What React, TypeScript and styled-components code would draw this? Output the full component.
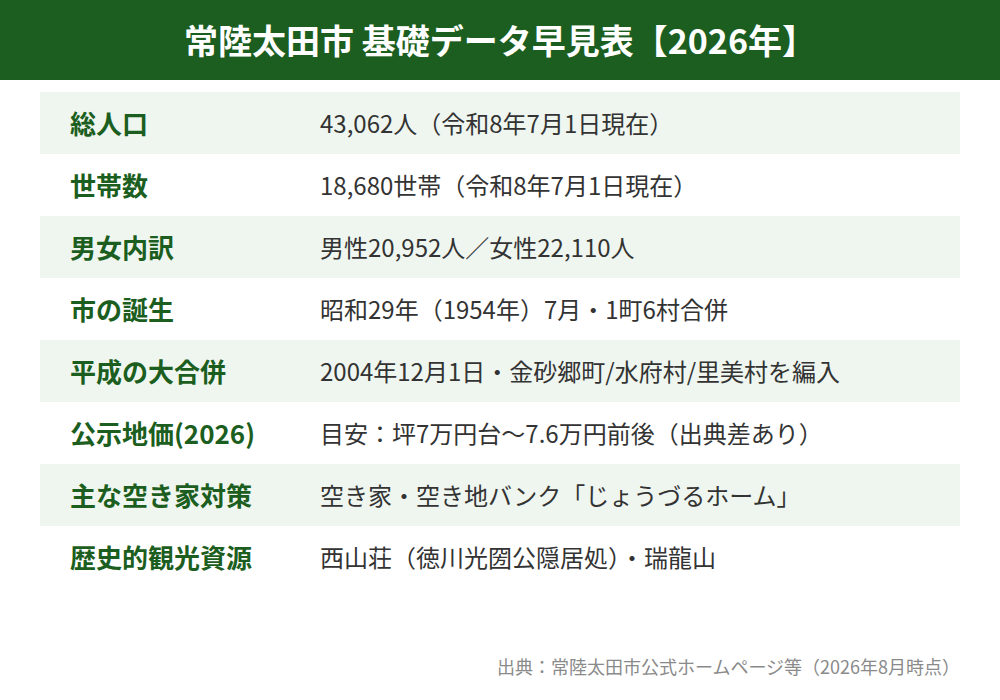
import React from "react";
import styled, { createGlobalStyle } from "styled-components";

const GlobalStyle = createGlobalStyle`
  html, body {
    margin: 0;
    padding: 0;
    background: #ffffff;
    font-family: "Noto Sans CJK JP", "Noto Sans", sans-serif;
  }
  * { box-sizing: border-box; }
`;

const Page = styled.div`
  width: 1000px;
  height: 700px;
  display: flex;
  flex-direction: column;
  background: #ffffff;
`;

const Header = styled.header`
  height: 80px;
  background: #1b5e20;
  display: flex;
  align-items: center;
  justify-content: center;
`;

const Title = styled.h1`
  margin: 0;
  color: #ffffff;
  font-size: 34px;
  font-weight: 700;
  line-height: 1;
`;

const Table = styled.div`
  margin: 12px 40px 0;
  display: flex;
  flex-direction: column;
`;

const Row = styled.div<{ $shaded: boolean }>`
  height: 62px;
  display: grid;
  grid-template-columns: 280px 1fr;
  align-items: center;
  background: ${(p) => (p.$shaded ? "#eff6f0" : "#ffffff")};
`;

const Label = styled.div`
  padding-left: 30px;
  color: #1b5e20;
  font-size: 26px;
  font-weight: 700;
  line-height: 1;
`;

const Value = styled.div`
  color: #333333;
  font-size: 24px;
  font-weight: 400;
  line-height: 1;
`;

const Footer = styled.div`
  margin-top: auto;
  padding: 0 40px 20px;
  text-align: right;
  color: #8a8a8a;
  font-size: 18px;
  line-height: 27px;
`;

const rows: [string, string][] = [
  ["総人口", "43,062人（令和8年7月1日現在）"],
  ["世帯数", "18,680世帯（令和8年7月1日現在）"],
  ["男女内訳", "男性20,952人／女性22,110人"],
  ["市の誕生", "昭和29年（1954年）7月・1町6村合併"],
  ["平成の大合併", "2004年12月1日・金砂郷町/水府村/里美村を編入"],
  ["公示地価(2026)", "目安：坪7万円台〜7.6万円前後（出典差あり）"],
  ["主な空き家対策", "空き家・空き地バンク「じょうづるホーム」"],
  ["歴史的観光資源", "西山荘（徳川光圀公隠居処）・瑞龍山"],
];

export default function App() {
  return (
    <Page>
      <GlobalStyle />
      <Header>
        <Title>常陸太田市 基礎データ早見表【2026年】</Title>
      </Header>
      <Table>
        {rows.map(([label, value], i) => (
          <Row key={label} $shaded={i % 2 === 0}>
            <Label>{label}</Label>
            <Value>{value}</Value>
          </Row>
        ))}
      </Table>
      <Footer>出典：常陸太田市公式ホームページ等（2026年8月時点）</Footer>
    </Page>
  );
}
